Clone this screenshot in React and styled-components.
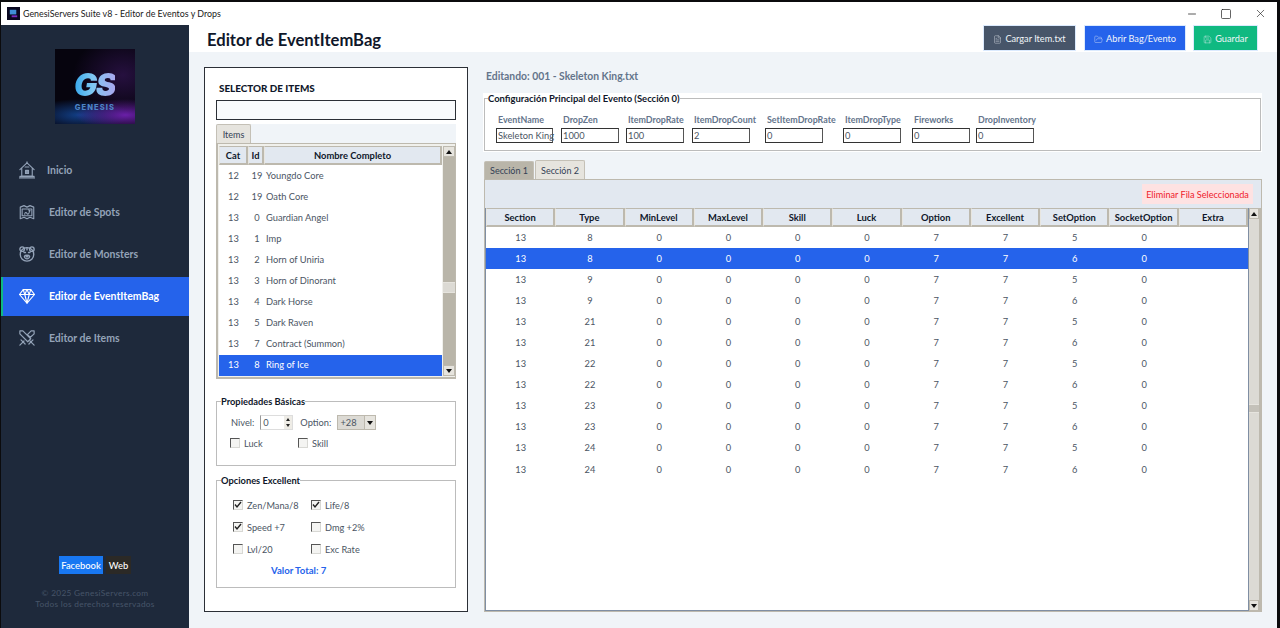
import React from "react";
import styled, { createGlobalStyle, css } from "styled-components";
import { FileText, FolderOpen, Save, Minus, Square, X } from "lucide-react";

const UI = `Lato, "Noto Sans", sans-serif`;

const Global = createGlobalStyle`
  * { box-sizing: border-box; }
  html, body { margin: 0; padding: 0; height: 100%; background: #0d0d0f; overflow: hidden; }
  body { font-family: ${UI}; }
  #root { height: 628px; }
`;

const Desktop = styled.div`
  width: 1280px; height: 628px; padding: 2px 3px 0 1px; background: #0b0b0d;
`;
const Win = styled.div`display: flex; flex-direction: column; height: 100%; background: #f0f4f8;`;
const TitleBar = styled.div`
  display: flex; align-items: center; height: 23px; flex: none; background: #fff; padding-left: 6px; gap: 3px;
`;
const TitleText = styled.span`font-size: 8.9px; color: #1a1a1a; flex: 1;`;
const WinBtn = styled.span`
  width: 34px; height: 23px; margin-left: -3px; display: flex; align-items: center; justify-content: center; color: #222;
`;
const Body = styled.div`display: flex; flex: 1; min-height: 0;`;

const Sidebar = styled.aside`
  width: 188px; flex: none; background: #1e293b; display: flex; flex-direction: column; align-items: stretch;
`;
const Logo = styled.div`
  align-self: center; margin: 24px 0 0 0; width: 80px; height: 75px; position: relative; overflow: hidden;
  background:
    radial-gradient(50px 16px at 88% 88%, #6a1fa8 0%, rgba(106,31,168,0) 100%),
    radial-gradient(50px 16px at 30% 88%, #123f86 0%, rgba(18,58,120,0) 100%),
    radial-gradient(50px 40px at 85% 35%, #26103f 0%, rgba(38,16,63,0) 100%),
    #06040e;
  display: flex; flex-direction: column; align-items: center;
`;
const LogoMark = styled.span`
  font: italic 900 31px/1 Inter, "Liberation Sans", sans-serif; margin: 20px 1px 0 0; letter-spacing: -1.5px;
  background: linear-gradient(90deg, #36a8ec 0%, #7fc7f2 45%, #a9a8ee 100%);
  -webkit-background-clip: text; background-clip: text; color: transparent;
`;
const LogoName = styled.span`
  font: 800 7.5px/1 Inter, "Liberation Sans", sans-serif; letter-spacing: 1.1px; margin-top: 4px; color: #4d84c6;
`;
const Nav = styled.nav`display: flex; flex-direction: column; margin-top: 25px;`;
const NavItem = styled.div`
  height: 42px; display: flex; align-items: center; gap: 13px; padding-left: 17px;
  font-size: 10.5px; font-weight: 700; color: #94a3b8; position: relative;
  svg { flex: none; }
  ${p => p.$home && css`gap: 11px;`}
  ${p => p.$active && css`
    color: #fff;
    &::before { content: ""; position: absolute; inset: 2px 0 1px 0; background: #2563eb; border-left: 2px solid #10b981; }
    > * { position: relative; }
  `}
`;
const SideFoot = styled.div`
  margin-top: auto; padding-bottom: 19px; display: flex; flex-direction: column; align-items: center;
`;
const Social = styled.div`display: flex; gap: 3px; margin-bottom: 14px;`;
const SocialBtn = styled.span`
  height: 18px; width: ${p => p.$w}px; display: flex; align-items: center; justify-content: center; font-size: 9.4px; font-weight: 500;
  color: #fff; background: ${p => p.$bg};
`;
const Copy = styled.div`font-size: 8.3px; line-height: 10.5px; color: #475569; text-align: center; letter-spacing: .3px;`;

const Main = styled.div`flex: 1; display: flex; flex-direction: column; min-width: 0;`;
const Header = styled.header`
  height: 27px; flex: none; background: #fff; display: flex; align-items: flex-start; padding: 0 19px 0 18px; gap: 7px;
`;
const PageTitle = styled.h1`
  margin: 5px auto 0 0; font-size: 16.6px; line-height: 20px; font-weight: 700; color: #0f172a;
`;
const HeadBtn = styled.button`
  height: 26px; width: ${p => p.$w}px; border: 1px solid #dbeafe; background: ${p => p.$bg}; color: #f1f5f9;
  margin-right: ${p => p.$mr || 0}px;
  font: 400 9.2px ${UI}; display: flex; align-items: center; justify-content: center; gap: 3px; padding: 0;
  svg { margin-top: 2px; }
`;
const Content = styled.div`flex: 1; display: flex; gap: 15px; padding: 15px 15px 16px 15px; min-height: 0;`;

const Panel = styled.section`
  width: 264px; flex: none; background: #fff; border: 1px solid #2b2f36; padding: 13px 11px 0; display: flex; flex-direction: column;
`;
const PanelTitle = styled.div`
  font-size: 9.9px; font-weight: 900; color: #0f172a; line-height: 14px; padding-left: 3px; margin-bottom: 5px;
`;
const Search = styled.div`height: 20px; flex: none; border: 1px solid #2b2f36; background: #f8fafc;`;
const TabStrip = styled.div`
  display: flex; height: 19px; flex: none; margin-top: 4px; background: #f0f4f8; align-items: flex-end;
`;
const Tab = styled.div`
  height: ${p => p.$h || 18}px; width: ${p => p.$w}px; display: flex; align-items: center; justify-content: center;
  font-size: 9px; color: #334155;
  background: ${p => p.$on ? "#e6e4de" : "#b9b5a9"};
  border: 1px solid #c4c0b6; border-bottom: 0; border-radius: 2px 2px 0 0;
`;
const Notebook = styled.div`
  height: 236px; flex: none; border: 1px solid #bdb9ae; border-width: 1px 1px 2px 2px; display: flex; padding: 2px 0 1px 1px; background: #f0f0ec;
`;
const Tree = styled.div`flex: 1; min-width: 0; background: #fff; display: flex; flex-direction: column;`;
const ListGrid = css`display: grid; grid-template-columns: 29px 16px 1fr;`;
const TreeHead = styled.div`${ListGrid} height: 19px; flex: none; gap: 0;`;
const HeadCell = styled.div`
  background: #e2e8f0; border: 1px solid #bdb9ae; border-bottom-width: 2px; border-left-color: #e8e6e0;
  font-size: 9.4px; font-weight: 700; color: #0f172a; display: flex; align-items: center; justify-content: center; min-width: 0;
  border-right-width: 2px; white-space: nowrap;
`;
const TreeRow = styled.div`
  ${ListGrid} height: 21.1px; align-items: center; font-size: 9.3px; line-height: 20px;
  color: ${p => p.$sel ? "#fff" : "#4b5563"}; background: ${p => p.$sel ? "#2563eb" : "transparent"};
`;
const Num = styled.span`text-align: center; padding-left: ${p => p.$pl || 0}px;`;
const Name = styled.span`padding-left: 2px; white-space: nowrap;`;

const ScrollBar = styled.div`
  width: 12px; flex: none; position: relative; margin-left: ${p => p.$light ? 0 : 1}px;
  background: ${p => p.$light ? "#dcdad4" : "#b9b5a9"};
  border-right: ${p => p.$light ? "2px solid #bdb9ae" : "0"};
`;
const Arrow = styled.div`
  position: absolute; left: 0; right: 0; height: 11px; background: #e6e4de; border: 1px solid #bdb9ae;
  display: flex; align-items: center; justify-content: center;
  ${p => p.$down ? "bottom: 0;" : "top: 0;"}
  &::after {
    content: ""; width: 0; height: 0; border-left: 3.5px solid transparent; border-right: 3.5px solid transparent;
    ${p => p.$down ? "border-top: 4px solid #111;" : "border-bottom: 4px solid #111;"}
  }
`;
const Thumb = styled.div`
  position: absolute; left: 0; right: 0; top: ${p => p.$top}px; height: ${p => p.$h}px;
  background: ${p => p.$bg}; border-top: 1px solid #e6e4de; border-bottom: 1px solid #e6e4de;
`;

const Group = styled.fieldset`
  margin: ${p => p.$mt}px 0 0; padding: 0; height: ${p => p.$h}px; flex: none; min-width: 0; position: relative;
  border: 1.5px solid #bcbcbc; background: #fff;
`;
const Legend = styled.legend`
  font-size: ${p => p.$fs || 9.3}px; font-weight: 700; color: #0f172a; padding: 0; margin-left: ${p => p.$ml || 4}px; line-height: 11px;
`;
const SpinRow = styled.div`display: flex; align-items: center; padding: 8px 0 0 14px; font-size: 9.3px; color: #4b5563;`;
const Spin = styled.div`
  width: 33px; height: 15px; margin-left: 6px; margin-right: 7px; background: #fff; border: 1px solid #ddd;
  border-left-color: #999; display: flex; align-items: center; padding-left: 2px; font-size: 9.3px; position: relative;
`;
const SpinBtns = styled.span`
  position: absolute; right: 0; top: 0; bottom: 0; width: 8px; background: #eeece6; display: flex; flex-direction: column; align-items: center; justify-content: space-around;
  &::before, &::after { content: ""; width: 0; height: 0; border-left: 2.5px solid transparent; border-right: 2.5px solid transparent; }
  &::before { border-bottom: 3px solid #222; }
  &::after { border-top: 3px solid #222; }
`;
const Combo = styled.div`
  width: 39px; height: 15px; margin-left: 6px; background: #dcdad4; border: 1px solid #bdb9ae; display: flex; align-items: center;
  padding-left: 2px; position: relative; font-size: 9.3px; color: #4b5563;
`;
const ComboBtn = styled.span`
  position: absolute; right: 0; top: 0; bottom: 0; width: 11px; background: #e6e4de; border-left: 1px solid #bdb9ae;
  display: flex; align-items: center; justify-content: center;
  &::after { content: ""; border-left: 3.5px solid transparent; border-right: 3.5px solid transparent; border-top: 4px solid #111; }
`;
const CheckGrid = styled.div`
  display: grid; grid-template-columns: ${p => p.$cols}; row-gap: ${p => p.$gap}px; padding: ${p => p.$pad};
`;
const Check = styled.label`display: flex; align-items: center; gap: 4px; font-size: 9.2px; color: #4b5563; height: 12px; white-space: nowrap;`;
const Box = styled.span`
  width: 10px; height: 10px; flex: none; background: #f4f4f2; border: 1px solid #d8d8d4; border-top-color: #555; border-left-color: #555;
  display: flex; align-items: center; justify-content: center;
`;
const Total = styled.div`
  font-size: 9.6px; font-weight: 700; color: #2563eb; padding-left: 54px; margin-top: 10px; line-height: 12px;
`;

const Right = styled.section`flex: 1; min-width: 0; display: flex; flex-direction: column;`;
const Editing = styled.div`font-size: 10.35px; font-weight: 700; color: #64748b; line-height: 14px; margin: 2px 0 10px 3px;`;
const ConfigWrap = styled.div`background: #fff; height: 59px; flex: none; padding: 0 1px 1px;`;
const ConfigGroup = styled.fieldset`
  margin: 0; padding: 10px 0 0 11px; height: 58px; border: 1.5px solid #bcbcbc; min-width: 0; display: flex; gap: 0; background: #fff;
`;
const Fields = styled.div`display: flex;`;
const Field = styled.div`width: ${p => p.$w}px; flex: none; display: flex; flex-direction: column;`;
const FieldLabel = styled.span`font-size: 8.9px; font-weight: 700; color: #64748b; padding-left: 2px; line-height: 12px; white-space: nowrap; margin-bottom: 2px;`;
const FieldInput = styled.div`
  width: ${p => p.$w || 58}px; height: 15px; border: 1px solid #333; border-right-color: #555; border-bottom-width: 1.5px; background: #fff;
  font-size: 9.3px; color: #4b5563; padding-left: 1px; display: flex; align-items: center; white-space: nowrap;
`;
const SecTabs = styled.div`display: flex; margin-top: 8px; height: 19px; flex: none; align-items: flex-end; padding-left: 1px; gap: 1px;`;
const SecBody = styled.div`
  flex: 1; min-height: 0; border: 1px solid #bdb9ae; display: flex; flex-direction: column; background: #e2e8f0; margin-left: 1px;
`;
const Toolbar = styled.div`height: 28px; flex: none; display: flex; align-items: center; justify-content: flex-end; padding-right: 8px;`;
const DeleteBtn = styled.div`
  height: 20px; width: 111px; background: #fee2e2; color: #ef1c2c; font-size: 9.15px; display: flex; align-items: center; justify-content: center;
`;
const TableWrap = styled.div`flex: 1; min-height: 0; display: flex; background: #fff;`;
const Table = styled.div`flex: 1; min-width: 0; background: #fff; border: 1px solid #7f8ea3; border-width: 0 1px 1px 1px; display: flex; flex-direction: column;`;
const TableGrid = css`display: grid; grid-template-columns: repeat(11, 1fr);`;
const THead = styled.div`${TableGrid} height: 19px; flex: none; background: #e2e8f0;`;
const TRow = styled.div`
  ${TableGrid} height: 21.1px; align-items: center; text-align: center; font-size: 9.3px; line-height: 20px;
  color: ${p => p.$sel ? "#fff" : "#4b5563"}; background: ${p => p.$sel ? "#2563eb" : "transparent"};
`;

const icon = { width: 18, height: 18, viewBox: "0 0 24 24", fill: "none", stroke: "currentColor", strokeWidth: 1.5, strokeLinejoin: "round", strokeLinecap: "round" };

const HomeIcon = () => (
  <svg {...icon}><path d="M2.5 11.5 12 2.5l9.5 9M5 9.5V20h14V9.5M2 22.5h20M2.5 20.5h19" /><path d="M9.5 8h5M10 12.5h4v4h-4zM12 12.5v4M10 14.5h4M12 2.5V1" /></svg>
);
const MapIcon = () => (
  <svg {...icon}><path d="M3 5.5 8 3.5l4 2 4-2 5 2V21l-5-2-4 2-4-2-5 2z" /><path d="M5.5 8h13v9h-13z" /><path d="M9 15c0-3 2-3 3-1s4 0 3-4M14 9l2 1-1 2" /></svg>
);
const BearIcon = () => (
  <svg {...icon} strokeWidth={1.8}><circle cx="5.5" cy="5.5" r="3" /><circle cx="18.5" cy="5.5" r="3" /><path d="M12 3.5c5.5 0 9 4 9 9s-4 9-9 9-9-4-9-9 3.5-9 9-9z" /><path d="M8 10h2M14 10h2M12 3.5v3M8.5 15c1-2 6-2 7 0 0 2-2 3.5-3.5 3.5S8.5 17 8.5 15zM11 15h2l-1 1.2z" /></svg>
);
const GemIcon = () => (
  <svg {...icon}><path d="M7 3.5h10l5 6.5-10 11.5L2 10z" /><path d="M2 10h20M7 3.5 9 10l3 11.5L15 10l2-6.5M9 10l3-6.5 3 6.5" /></svg>
);
const SwordsIcon = () => (
  <svg {...icon} strokeWidth={1.6}><path d="M2.5 2.5h4L17 13l-4 4L2.5 6.5zM21.5 2.5h-4L12.5 7.5l4 3.5 5-4.5z" /><path d="M4 14.5l5.5 5.5M2.5 21.5l4-4M20 14.5 14.5 20M21.5 21.5l-4-4M8 16l-2 2M16 16l2 2" /></svg>
);

const navItems = [
  ["Inicio", HomeIcon], ["Editor de Spots", MapIcon], ["Editor de Monsters", BearIcon],
  ["Editor de EventItemBag", GemIcon], ["Editor de Items", SwordsIcon],
];
const listRows = [
  [12,19,"Youngdo Core"],[12,19,"Oath Core"],[13,0,"Guardian Angel"],[13,1,"Imp"],[13,2,"Horn of Uniria"],
  [13,3,"Horn of Dinorant"],[13,4,"Dark Horse"],[13,5,"Dark Raven"],[13,7,"Contract (Summon)"],[13,8,"Ring of Ice"],
];
const fields = [
  ["EventName","Skeleton King",65],["DropZen","1000",65],["ItemDropRate","100",66],["ItemDropCount","2",73],
  ["SetItemDropRate","0",78],["ItemDropType","0",69],["Fireworks","0",64],["DropInventory","0",64],
];
const cols = ["Section","Type","MinLevel","MaxLevel","Skill","Luck","Option","Excellent","SetOption","SocketOption","Extra"];
const types = [[8,5],[8,6],[9,5],[9,6],[21,5],[21,6],[22,5],[22,6],[23,5],[23,6],[24,5],[24,6]];

const Tick = () => (
  <svg width="8" height="8" viewBox="0 0 8 8"><path d="M1 3.5 3 6l4-5" fill="none" stroke="#222" strokeWidth="1.4" /></svg>
);
const Opt = ({ on, label }) => <Check><Box>{on && <Tick />}</Box>{label}</Check>;

export default function App() {
  return (
    <Desktop>
      <Global />
      <Win>
        <TitleBar>
          <svg width="13" height="13" viewBox="0 0 14 14"><rect width="14" height="14" fill="#0a0820" /><rect x="3" y="3" width="7" height="5" fill="#3f8fd8" /><rect x="5" y="9" width="6" height="2" fill="#7a2cc0" /></svg>
          <TitleText>GenesiServers Suite v8 - Editor de Eventos y Drops</TitleText>
          <WinBtn><Minus size={12} strokeWidth={1.5} /></WinBtn>
          <WinBtn><Square size={12} strokeWidth={1.4} /></WinBtn>
          <WinBtn><X size={13} strokeWidth={1.2} /></WinBtn>
        </TitleBar>
        <Body>
          <Sidebar>
            <Logo>
              <LogoMark>GS</LogoMark>
              <LogoName>GENESIS</LogoName>
            </Logo>
            <Nav>
              {navItems.map(([label, I], i) => (
                <NavItem key={label} $active={i === 3} $home={i === 0}><I /><span>{label}</span></NavItem>
              ))}
            </Nav>
            <SideFoot>
              <Social>
                <SocialBtn $bg="#1877f2" $w={44}>Facebook</SocialBtn>
                <SocialBtn $bg="#2b2926" $w={25}>Web</SocialBtn>
              </Social>
              <Copy>© 2025 GenesiServers.com<br />Todos los derechos reservados</Copy>
            </SideFoot>
          </Sidebar>
          <Main>
            <Header>
              <PageTitle>Editor de EventItemBag</PageTitle>
              <HeadBtn $bg="#475569" $w={93} $mr={1}><FileText size={9} strokeWidth={1} />Cargar Item.txt</HeadBtn>
              <HeadBtn $bg="#2563eb" $w={102}><FolderOpen size={9} strokeWidth={1} />Abrir Bag/Evento</HeadBtn>
              <HeadBtn $bg="#10b981" $w={65}><Save size={9} strokeWidth={1} />Guardar</HeadBtn>
            </Header>
            <Content>
              <Panel>
                <PanelTitle>SELECTOR DE ITEMS</PanelTitle>
                <Search />
                <TabStrip><Tab $on $h={19} $w={35}>Items</Tab></TabStrip>
                <Notebook>
                  <Tree>
                    <TreeHead>
                      <HeadCell>Cat</HeadCell><HeadCell>Id</HeadCell><HeadCell>Nombre Completo</HeadCell>
                    </TreeHead>
                    {listRows.map(([c, id, n]) => (
                      <TreeRow key={c + n} $sel={n === "Ring of Ice"}>
                        <Num>{c}</Num><Num $pl={2}>{id}</Num><Name>{n}</Name>
                      </TreeRow>
                    ))}
                  </Tree>
                  <ScrollBar>
                    <Arrow />
                    <Thumb $top={136} $h={11} $bg="#dcdad4" />
                    <Arrow $down />
                  </ScrollBar>
                </Notebook>
                <Group $mt={17} $h={70}>
                  <Legend>Propiedades Básicas</Legend>
                  <SpinRow>
                    Nivel:
                    <Spin>0<SpinBtns /></Spin>
                    Option:
                    <Combo>+28<ComboBtn /></Combo>
                  </SpinRow>
                  <CheckGrid $cols="68px 1fr" $gap={0} $pad="7px 0 0 13px">
                    <Opt label="Luck" /><Opt label="Skill" />
                  </CheckGrid>
                </Group>
                <Group $mt={9} $h={113}>
                  <Legend>Opciones Excellent</Legend>
                  <CheckGrid $cols="78px 1fr" $gap={10} $pad="13px 0 0 16px">
                    <Opt on label="Zen/Mana/8" /><Opt on label="Life/8" />
                    <Opt on label="Speed +7" /><Opt label="Dmg +2%" />
                    <Opt label="Lvl/20" /><Opt label="Exc Rate" />
                  </CheckGrid>
                  <Total>Valor Total: 7</Total>
                </Group>
              </Panel>
              <Right>
                <Editing>Editando: 001 - Skeleton King.txt</Editing>
                <ConfigWrap>
                  <ConfigGroup as="fieldset">
                    <Legend $ml={-8} $fs={9.45}>Configuración Principal del Evento (Sección 0)</Legend>
                    <Fields>
                      {fields.map(([l, v, w], i) => (
                        <Field key={l} $w={w}>
                          <FieldLabel>{l}</FieldLabel>
                          <FieldInput $w={i === 0 ? 57 : 58}>{v}</FieldInput>
                        </Field>
                      ))}
                    </Fields>
                  </ConfigGroup>
                </ConfigWrap>
                <SecTabs>
                  <Tab $w={50}>Sección 1</Tab>
                  <Tab $on $h={19} $w={50}>Sección 2</Tab>
                </SecTabs>
                <SecBody>
                  <Toolbar><DeleteBtn>Eliminar Fila Seleccionada</DeleteBtn></Toolbar>
                  <TableWrap>
                    <Table>
                      <THead>{cols.map(c => <HeadCell key={c}>{c}</HeadCell>)}</THead>
                      {types.map(([t, s], i) => (
                        <TRow key={i} $sel={i === 1}>
                          <span>13</span><span>{t}</span><span>0</span><span>0</span><span>0</span><span>0</span>
                          <span>7</span><span>7</span><span>{s}</span><span>0</span><span />
                        </TRow>
                      ))}
                    </Table>
                    <ScrollBar $light>
                      <Arrow />
                      <Thumb $top={196} $h={9} $bg="#c4c1b9" />
                      <Arrow $down />
                    </ScrollBar>
                  </TableWrap>
                </SecBody>
              </Right>
            </Content>
          </Main>
        </Body>
      </Win>
    </Desktop>
  );
}
